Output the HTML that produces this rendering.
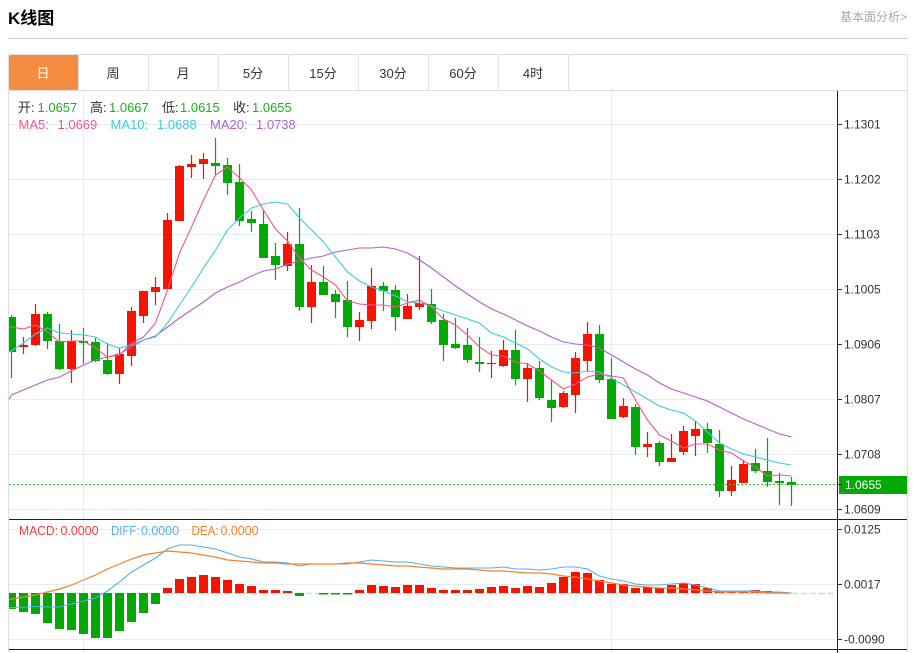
<!DOCTYPE html>
<html lang="zh">
<head>
<meta charset="utf-8">
<title>K线图</title>
<style>
html,body{margin:0;padding:0;background:#fff;width:918px;height:653px;overflow:hidden}
svg{display:block;font-family:"Liberation Sans","Noto Sans CJK SC",sans-serif}
</style>
</head>
<body>
<svg width="918" height="653" viewBox="0 0 918 653" xmlns="http://www.w3.org/2000/svg">
<defs>
<clipPath id="p"><rect x="9" y="91" width="828" height="562"/></clipPath>
</defs>
<!-- header -->
<text x="8" y="24" font-size="17" font-weight="700" fill="#000">K线图</text>
<text x="840" y="21" font-size="12" fill="#a8a8a8">基本面分析&gt;</text>
<path d="M8 38.5H908" stroke="#cfcfcf" fill="none"/>
<!-- frame -->
<path d="M8.5 54V653M907.5 54V653M8 54.5H908M8 90.5H908" stroke="#dedede" fill="none"/>
<!-- tabs -->
<rect x="9" y="55" width="69.5" height="35" rx="2" fill="#f48c42"/>
<path d="M78.5 55V90M148.5 55V90M218.5 55V90M288.5 55V90M358.5 55V90M428.5 55V90M498.5 55V90M568.5 55V90" stroke="#dedede" fill="none"/>
<g font-size="13" text-anchor="middle" fill="#333">
<text x="43" y="78" fill="#fff">日</text>
<text x="113" y="78">周</text>
<text x="183" y="78">月</text>
<text x="253" y="78">5分</text>
<text x="323" y="78">15分</text>
<text x="393" y="78">30分</text>
<text x="463" y="78">60分</text>
<text x="533" y="78">4时</text>
</g>
<!-- grid -->
<path d="M9 124.5H837M9 179.5H837M9 234.5H837M9 289.5H837M9 344.5H837M9 399.5H837M9 454.5H837M9 509.5H837M9 529.5H837M9 584.5H837M9 639.5H837M83.5 91V653M611.5 91V653" stroke="#e4edf2" fill="none"/>
<g clip-path="url(#p)">
<!-- candle wicks -->
<path fill="none" stroke="#04a804" stroke-width="1.2" d="M11.5 315V378M47.5 312V349M59.5 324V370M83.5 328V364M95.5 338V362M107.5 343V375M215.5 138V175M227.5 158V195M239.5 164V226M251.5 211V232M263.5 210V258M275.5 243V280M299.5 208V311M323.5 266V295M335.5 290V318M347.5 281V337M383.5 282V311M395.5 285V331M431.5 289V324M443.5 314V361M455.5 318V349M467.5 328V363M479.5 337V372M515.5 330V385M539.5 361V400M551.5 380V422M599.5 325V383M611.5 358V419M635.5 404V455M659.5 441V466M707.5 423V453M719.5 430V497M755.5 449V473M767.5 438V487M779.5 473V505M791.5 477V506"/>
<path fill="none" stroke="#f01400" stroke-width="1.2" d="M23.5 337V354M35.5 304V346M71.5 330V383M119.5 348V384M131.5 307V366M143.5 291V323M155.5 277V305M167.5 213V289M179.5 165V221M191.5 155V178M203.5 153V179M287.5 232V271M311.5 265V323M359.5 312V341M371.5 268V329M407.5 294V319M419.5 256V310M491.5 351V378M503.5 340V367M527.5 363V402M563.5 391V408M575.5 352V413M587.5 322V372M623.5 398V418M647.5 432V457M671.5 434V462M683.5 426V455M695.5 421V456M731.5 466V496M743.5 460V483"/>
<!-- candle bodies -->
<path fill="#04a804" d="M7 317h9v35h-9zM43 314h9v27h-9zM55 341h9v28h-9zM79 341h9v2h-9zM91 342h9v19h-9zM103 360h9v14h-9zM211 163h9v3h-9zM223 165h9v18h-9zM235 182h9v39h-9zM247 219h9v4h-9zM259 224h9v34h-9zM271 256h9v9h-9zM295 244h9v63h-9zM319 282h9v13h-9zM331 294h9v8h-9zM343 300h9v27h-9zM379 286h9v5h-9zM391 290h9v27h-9zM427 304h9v18h-9zM439 320h9v25h-9zM451 344h9v4h-9zM463 345h9v15h-9zM475 362h9v2h-9zM511 350h9v29h-9zM535 368h9v30h-9zM547 400h9v8h-9zM595 334h9v46h-9zM607 379h9v40h-9zM631 407h9v40h-9zM655 443h9v19h-9zM703 429h9v14h-9zM715 444h9v47h-9zM751 463h9v8h-9zM763 471h9v11h-9zM775 481h9v2h-9zM787 482h9v3h-9z"/>
<path fill="#f51400" d="M19 345h9v2h-9zM31 314h9v31h-9zM67 341h9v28h-9zM115 354h9v20h-9zM127 311h9v45h-9zM139 291h9v25h-9zM151 287h9v5h-9zM163 220h9v69h-9zM175 166h9v55h-9zM187 164h9v3h-9zM199 159h9v5h-9zM283 244h9v22h-9zM307 282h9v25h-9zM355 320h9v7h-9zM367 286h9v35h-9zM403 306h9v13h-9zM415 303h9v4h-9zM487 363h9v1h-9zM499 350h9v16h-9zM523 368h9v11h-9zM559 393h9v14h-9zM571 358h9v37h-9zM583 334h9v27h-9zM619 406h9v11h-9zM643 444h9v3h-9zM667 458h9v4h-9zM679 431h9v21h-9zM691 429h9v7h-9zM727 480h9v11h-9zM739 464h9v19h-9z"/>
<!-- MA lines -->
<polyline fill="none" stroke="#b45fd0" stroke-width="1.1" points="9,399.5 11.5,395 23.5,390 35.5,385 47.5,380 59.5,377 71.5,371 83.5,365 95.5,360 107.5,357 119.5,354 131.5,347 143.5,340 155.5,336 167.5,327 179.5,318 191.5,310 203.5,302 215.5,293 227.5,287 239.5,282 251.5,276 263.5,271 275.5,269 287.5,264 299.5,261 311.5,258 323.5,256 335.5,252 347.5,250 359.5,248 371.5,248 383.5,247 395.5,249 407.5,253 419.5,260 431.5,268 443.5,277 455.5,286 467.5,294 479.5,302 491.5,309 503.5,314 515.5,320 527.5,326 539.5,331 551.5,337 563.5,342 575.5,344 587.5,345 599.5,348 611.5,355 623.5,362 635.5,369 647.5,375 659.5,383 671.5,389 683.5,393 695.5,397 707.5,401 719.5,407 731.5,413 743.5,419 755.5,424 767.5,429 779.5,434 791.5,437"/>
<polyline fill="none" stroke="#3ccde2" stroke-width="1.1" points="9,352 11.5,351 23.5,343 35.5,334 47.5,328 59.5,333 71.5,334 83.5,335 95.5,337 107.5,344 119.5,348 131.5,345 143.5,340 155.5,337 167.5,323 179.5,305 191.5,287 203.5,268 215.5,250 227.5,230 239.5,218 251.5,208 263.5,204 275.5,202 287.5,204 299.5,218 311.5,230 323.5,242 335.5,257 347.5,272 359.5,281 371.5,287 383.5,291 395.5,296 407.5,302 419.5,303 431.5,306 443.5,311 455.5,315 467.5,319 479.5,323 491.5,333 503.5,337 515.5,343 527.5,349 539.5,359 551.5,367 563.5,372 575.5,373 587.5,371 599.5,372 611.5,378 623.5,385 635.5,392 647.5,399 659.5,406 671.5,410 683.5,413 695.5,421 707.5,432 719.5,443 731.5,449 743.5,454 755.5,457 767.5,460 779.5,463 791.5,465"/>
<polyline fill="none" stroke="#f4558d" stroke-width="1.1" points="9,327 11.5,327 23.5,329 35.5,325 47.5,332 59.5,342 71.5,341 83.5,341 95.5,348 107.5,357 119.5,355 131.5,343 143.5,337 155.5,323 167.5,290 179.5,253 191.5,227 203.5,200 215.5,175 227.5,167 239.5,178 251.5,190 263.5,210 275.5,229 287.5,241 299.5,258 311.5,270 323.5,277 335.5,285 347.5,301 359.5,304 371.5,305 383.5,305 395.5,307 407.5,303 419.5,300 431.5,307 443.5,319 455.5,325 467.5,335 479.5,347 491.5,355 503.5,356 515.5,362 527.5,364 539.5,371 551.5,380 563.5,389 575.5,384 587.5,377 599.5,374 611.5,376 623.5,378 635.5,400 647.5,420 659.5,435 671.5,441 683.5,448 695.5,444 707.5,444 719.5,450 731.5,453 743.5,461 755.5,467 767.5,476 779.5,475 791.5,476"/>
<!-- current price line -->
<path d="M9 484.5H836" stroke="#2ecb2e" stroke-dasharray="2 2" fill="none"/>
<!-- MACD zero line -->
<path d="M9 593.5H836" stroke="#b9e1f2" stroke-width="1.4" stroke-dasharray="6 3" fill="none"/>
<!-- MACD bars -->
<path fill="#04a804" d="M7 593h9v16h-9zM19 593h9v19h-9zM31 593h9v21h-9zM43 593h9v30h-9zM55 593h9v36h-9zM67 593h9v37h-9zM79 593h9v41h-9zM91 593h9v45h-9zM103 593h9v45h-9zM115 593h9v38h-9zM127 593h9v29h-9zM139 593h9v20h-9zM151 593h9v11h-9zM295 593h9v3h-9zM319 593h9v1.5h-9zM331 593h9v1.5h-9zM343 593h9v1.5h-9z"/>
<path fill="#f51400" d="M163 588h9v5h-9zM175 579h9v14h-9zM187 577h9v16h-9zM199 575h9v18h-9zM211 577h9v16h-9zM223 580h9v13h-9zM235 584h9v9h-9zM247 586h9v7h-9zM259 590h9v3h-9zM271 590h9v3h-9zM283 591h9v2h-9zM355 590h9v3h-9zM367 585h9v8h-9zM379 586h9v7h-9zM391 587h9v6h-9zM403 585h9v8h-9zM415 585h9v8h-9zM427 588h9v5h-9zM439 590h9v3h-9zM451 590h9v3h-9zM463 590h9v3h-9zM475 589h9v4h-9zM487 587h9v6h-9zM499 586h9v7h-9zM511 588h9v5h-9zM523 586h9v7h-9zM535 587h9v6h-9zM547 583h9v10h-9zM559 577h9v16h-9zM571 572h9v21h-9zM583 573h9v20h-9zM595 580h9v13h-9zM607 584h9v9h-9zM619 584h9v9h-9zM631 588h9v5h-9zM643 587h9v6h-9zM655 588h9v5h-9zM667 585h9v8h-9zM679 583h9v10h-9zM691 584h9v9h-9zM703 588h9v5h-9zM715 591h9v2h-9zM727 591h9v2h-9zM739 591h9v2h-9zM751 590h9v3h-9zM763 591h9v2h-9z"/>
<!-- DIFF / DEA -->
<polyline fill="none" stroke="#55aef0" stroke-width="1.1" points="9,608 11.5,607.5 23.5,607 35.5,606.5 47.5,607 59.5,607 71.5,604 83.5,601 95.5,598 107.5,591 119.5,582 131.5,572 143.5,565 155.5,558 167.5,549 179.5,545 191.5,545 203.5,547 215.5,549 227.5,553 239.5,557 251.5,559 263.5,562 275.5,562 287.5,563 299.5,566 311.5,564 323.5,564 335.5,564 347.5,564 359.5,562 371.5,560 383.5,561 395.5,562 407.5,562 419.5,564 431.5,566 443.5,567 455.5,568 467.5,568 479.5,568 491.5,568 503.5,567 515.5,569 527.5,569 539.5,570 551.5,569 563.5,567 575.5,567 587.5,569 599.5,576 611.5,579 623.5,581 635.5,584 647.5,585 659.5,585 671.5,584 683.5,583 695.5,585 707.5,588 719.5,591 731.5,591 743.5,591 755.5,591 767.5,592 779.5,592 791.5,593"/>
<polyline fill="none" stroke="#f9802a" stroke-width="1.2" points="9,600 11.5,599 23.5,597 35.5,595 47.5,592 59.5,589 71.5,585 83.5,580 95.5,575 107.5,569 119.5,564 131.5,559 143.5,555 155.5,553 167.5,551 179.5,552 191.5,553 203.5,555 215.5,557 227.5,560 239.5,561 251.5,562 263.5,563 275.5,563 287.5,564 299.5,564 311.5,564 323.5,564 335.5,564 347.5,563 359.5,563 371.5,564 383.5,565 395.5,566 407.5,566 419.5,567 431.5,568 443.5,569 455.5,569 467.5,569 479.5,570 491.5,571 503.5,571 515.5,572 527.5,573 539.5,573 551.5,574 563.5,576 575.5,577 587.5,579 599.5,581 611.5,583 623.5,585 635.5,586 647.5,587 659.5,588 671.5,588 683.5,589 695.5,590 707.5,591 719.5,592 731.5,592 743.5,592 755.5,592 767.5,593 779.5,593 791.5,593"/>
</g>
<!-- price tag -->
<rect x="839" y="476" width="68" height="18" fill="#04a804"/>
<!-- axes -->
<path d="M9 519.5H907M9 649.5H907M837.5 91V653" stroke="#222" fill="none"/>
<path d="M837 124.5H842M837 179.5H842M837 234.5H842M837 289.5H842M837 344.5H842M837 399.5H842M837 454.5H842M837 484.5H842M837 509.5H842M837 529.5H842M837 584.5H842M837 639.5H842" stroke="#333" fill="none"/>
<g font-size="12" fill="#333">
<text x="844" y="128.5">1.1301</text>
<text x="844" y="183.5">1.1202</text>
<text x="844" y="238.5">1.1103</text>
<text x="844" y="293.5">1.1005</text>
<text x="844" y="348.5">1.0906</text>
<text x="844" y="403.5">1.0807</text>
<text x="844" y="458.5">1.0708</text>
<text x="845" y="489" fill="#fff">1.0655</text>
<text x="844" y="513.5">1.0609</text>
<text x="844" y="533.5">0.0125</text>
<text x="844" y="588.5">0.0017</text>
<text x="844" y="643.5">-0.0090</text>
</g>
<!-- legends -->
<g font-size="13">
<g fill="#333">
<text x="18" y="112">开:</text>
<text x="90" y="112">高:</text>
<text x="162" y="112">低:</text>
<text x="233" y="112">收:</text>
</g>
<g fill="#1bb01b">
<text x="37.5" y="112">1.0657</text>
<text x="109" y="112">1.0667</text>
<text x="180" y="112">1.0615</text>
<text x="252" y="112">1.0655</text>
</g>
<g fill="#f4558d"><text x="18.5" y="129">MA5:</text><text x="57.5" y="129">1.0669</text></g>
<g fill="#3ccde2"><text x="110.5" y="129">MA10:</text><text x="157" y="129">1.0688</text></g>
<g fill="#b45fd0"><text x="210" y="129">MA20:</text><text x="256" y="129">1.0738</text></g>
<g fill="#f53c3c"><text x="19" y="535" textLength="39" lengthAdjust="spacingAndGlyphs">MACD:</text><text x="60.5" y="535" textLength="38" lengthAdjust="spacingAndGlyphs">0.0000</text></g>
<g fill="#55aef0"><text x="111" y="535" textLength="28.5" lengthAdjust="spacingAndGlyphs">DIFF:</text><text x="141" y="535" textLength="38" lengthAdjust="spacingAndGlyphs">0.0000</text></g>
<g fill="#f9802a"><text x="191.5" y="535" textLength="27" lengthAdjust="spacingAndGlyphs">DEA:</text><text x="220.5" y="535" textLength="38" lengthAdjust="spacingAndGlyphs">0.0000</text></g>
</g>
</svg>
</body>
</html>
